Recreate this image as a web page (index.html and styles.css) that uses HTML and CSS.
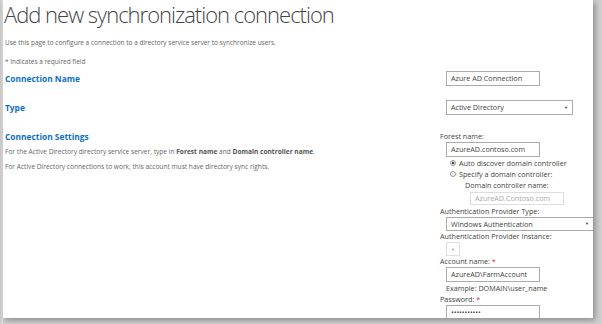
FILE: index.html
```html
<!DOCTYPE html>
<html lang="en">
<head>
    <meta charset="UTF-8">
    <title>Add new synchronization connection</title>
    <link rel="stylesheet" href="styles.css">
</head>
<body>
<div class="frame">
    <div class="page">
        <h1 class="title">Add new synchronization connection</h1>
        <p class="intro">Use this page to configure a connection to a directory service server to synchronize users.</p>
        <p class="required">* Indicates a required field</p>

        <div class="section sec-name">
            <div class="left">
                <h2>Connection Name</h2>
            </div>
            <div class="right">
                <div class="input">Azure AD Connection</div>
            </div>
        </div>

        <div class="section sec-type">
            <div class="left">
                <h2>Type</h2>
            </div>
            <div class="right">
                <div class="select">Active Directory<span class="arrow">&#9660;</span></div>
            </div>
        </div>

        <div class="section sec-settings">
            <div class="left">
                <h2>Connection Settings</h2>
                <p class="desc first">For the Active Directory directory service server, type in <b>Forest name</b> and <b>Domain controller name</b>.</p>
                <p class="desc">For Active Directory connections to work, this account must have directory sync rights.</p>
            </div>
            <div class="right">
                <div class="lbl">Forest name:</div>
                <div class="input">AzureAD.contoso.com</div>
                <div class="radio r1"><span class="dot on"></span>Auto discover domain controller</div>
                <div class="radio"><span class="dot"></span>Specify a domain controller:</div>
                <div class="lbl sub">Domain controller name:</div>
                <div class="input disabled">AzureAD.Contoso.com</div>
                <div class="lbl tall">Authentication Provider Type:</div>
                <div class="select wide">Windows Authentication<span class="arrow">&#9660;</span></div>
                <div class="lbl">Authentication Provider Instance:</div>
                <div class="select tiny"><span class="arrow">&#9660;</span></div>
                <div class="lbl">Account name: <span class="star">*</span></div>
                <div class="input">AzureAD\FarmAccount</div>
                <div class="hint">Example: DOMAIN\user_name</div>
                <div class="lbl">Password: <span class="star">*</span></div>
                <div class="input">&bull;&bull;&bull;&bull;&bull;&bull;&bull;&bull;&bull;&bull;&bull;</div>
            </div>
        </div>
    </div>
</div>
</body>
</html>
```

FILE: styles.css
```css
html, body {
    margin: 0;
    padding: 0;
    height: 324px;
    overflow: hidden;
    background-color: #cfcfcf;
}
.frame {
    width: 602px;
    height: 324px;
    background: linear-gradient(to right, #c8c8c8 0, #e6e6e6 3px, transparent 3px);
}
.page {
    margin-left: 3px;
    width: 590px;
    height: 318px;
    background-color: #fff;
    box-shadow: 2px 2px 6px rgba(0, 0, 0, 0.35);
    font-family: "Open Sans", sans-serif;
    color: #555;
    overflow: hidden;
}
.title {
    margin: 0;
    padding: 0 0 0 1px;
    font-weight: 300;
    font-size: 22px;
    line-height: 28px;
    color: #444;
    letter-spacing: -1px;
    white-space: nowrap;
}
.intro, .required {
    margin: 0;
    padding-left: 2px;
    font-size: 6.5px;
    line-height: 9px;
    color: #666;
}
.intro {
    margin-top: 10px;
}
.required {
    margin-top: 10px;
}
.section {
    display: flex;
}
.sec-name, .sec-type {
    align-items: center;
}
.left {
    flex: 1;
    padding-left: 2px;
}
.right {
    width: 153px;
    font-size: 7.2px;
    color: #444;
}
h2 {
    margin: 0;
    font-size: 8.4px;
    line-height: 11px;
    font-weight: 700;
    color: #0f6fc6;
}
.sec-name {
    margin-top: 5px;
}
.sec-type {
    margin-top: 14px;
}
.sec-settings {
    margin-top: 16px;
}
.desc {
    margin: 6px 0 0;
    font-size: 6.6px;
    line-height: 9px;
    color: #666;
}
.desc.first {
    margin-top: 5px;
}
.desc b {
    color: #555;
}
.input, .select {
    box-sizing: border-box;
    margin-left: 6px;
    height: 15px;
    width: 94px;
    border: 1px solid #ababab;
    padding: 0 4px;
    line-height: 13px;
    white-space: nowrap;
    color: #444;
}
.select {
    width: 127px;
    height: 15px;
    display: flex;
    justify-content: space-between;
}
.select.wide {
    width: 148px;
    height: 14px;
    line-height: 12px;
}
.select.tiny {
    width: 14px;
    height: 14px;
    justify-content: center;
    padding: 0;
    border-color: #ddd;
}
.select.tiny .arrow {
    color: #999;
}
.arrow {
    font-size: 4px;
    color: #333;
}
.lbl {
    line-height: 11px;
}
.lbl.tall {
    line-height: 12px;
}
.radio {
    margin-left: 10px;
    height: 12px;
    display: flex;
    align-items: center;
}
.radio.r1 {
    height: 11px;
}
.dot {
    width: 6px;
    height: 6px;
    border: 1px solid #999;
    border-radius: 50%;
    margin-right: 3px;
    box-sizing: border-box;
    background-color: #f3f3f3;
}
.dot.on {
    background: radial-gradient(circle, #444 0 1.4px, #f3f3f3 1.6px);
}
.lbl.sub {
    margin-left: 25px;
}
.input.disabled {
    margin-left: 30px;
    margin-top: 1px;
    height: 13px;
    line-height: 11px;
    color: #aaa;
    border-color: #ddd;
}
.hint {
    margin-left: 6px;
    line-height: 12px;
}
.star {
    color: #c33;
}
```
